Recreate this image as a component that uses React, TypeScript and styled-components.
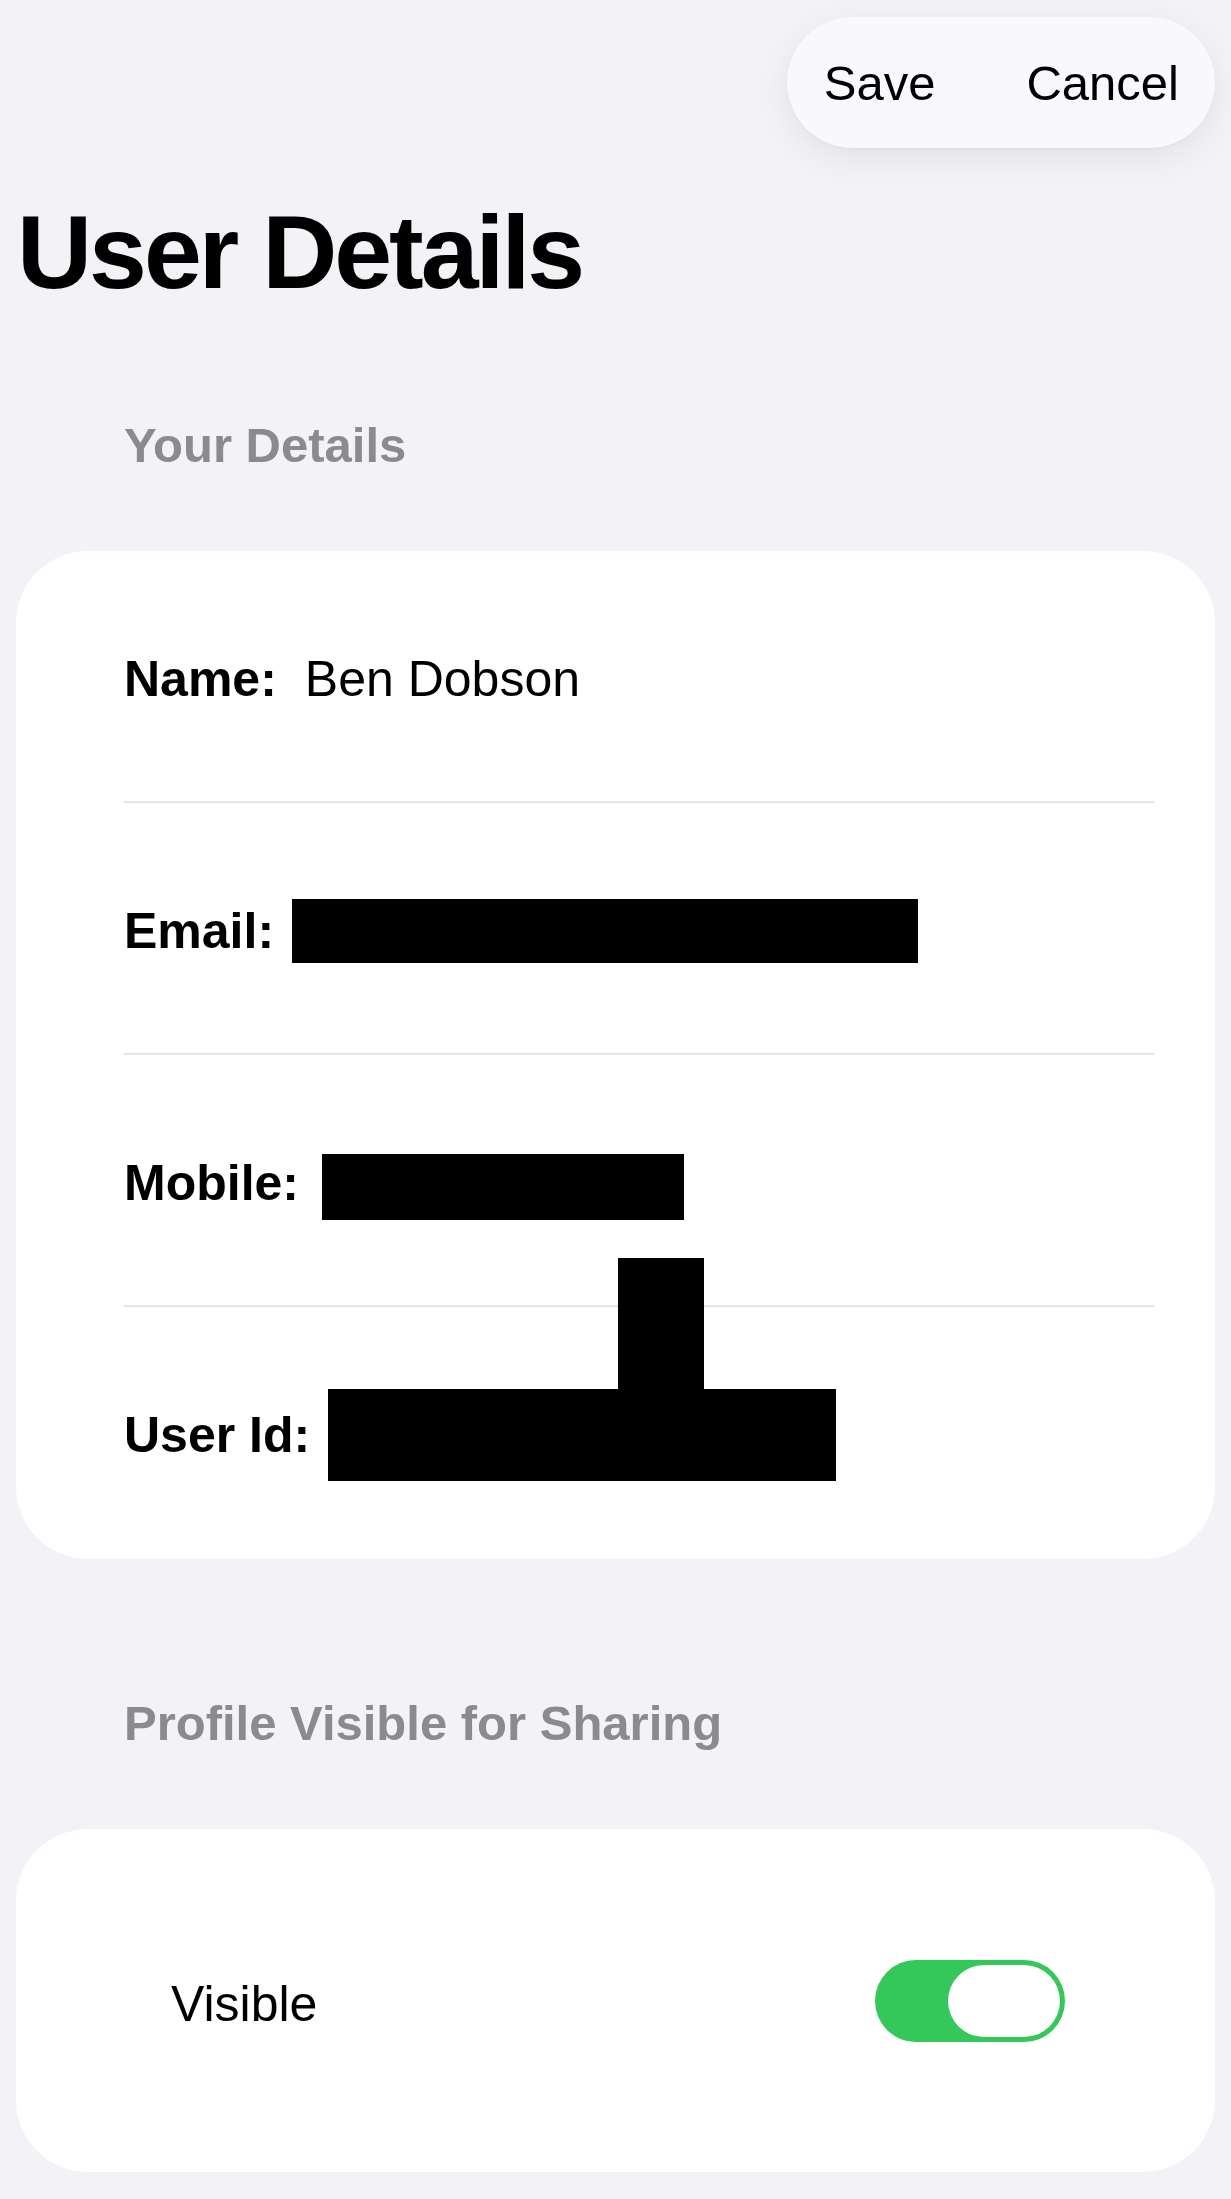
import React from "react";
import styled, { createGlobalStyle } from "styled-components";

const GlobalStyle = createGlobalStyle`
  html, body {
    margin: 0;
    padding: 0;
    background: #f2f2f7;
  }
  body {
    font-family: "Liberation Sans", Arial, sans-serif;
    color: #000;
    -webkit-font-smoothing: antialiased;
  }
  * { box-sizing: border-box; }
`;

const Page = styled.div`
  display: flex;
  flex-direction: column;
  width: 1231px;
  min-height: 2199px;
  padding: 17px 0 26px;
  background: #f2f2f7;
`;

const TopBar = styled.div`
  display: flex;
  justify-content: flex-end;
  padding: 0 16px;
`;

const ActionPill = styled.div`
  display: flex;
  align-items: center;
  gap: 91px;
  height: 131px;
  padding: 0 36px 0 37px;
  border-radius: 66px;
  background: #f9f9fd;
  box-shadow: 0 10px 34px rgba(0, 0, 0, 0.07), 0 1px 3px rgba(0, 0, 0, 0.03);
`;

const PillButton = styled.button`
  border: 0;
  padding: 0;
  background: transparent;
  font-family: "Liberation Sans", Arial, sans-serif;
  font-size: 49px;
  line-height: 60px;
  color: #000;
  cursor: pointer;
`;

const Title = styled.h1`
  margin: 52px 0 0;
  padding: 0 17px;
  font-size: 104px;
  line-height: 104px;
  font-weight: 700;
  letter-spacing: -3px;
`;

const SectionHeader = styled.h2<{ $top: number }>`
  margin: ${(p) => p.$top}px 0 0;
  padding: 0 0 0 124px;
  font-size: 49px;
  line-height: 49px;
  font-weight: 700;
  color: #8a8a8f;
`;

const Card = styled.div<{ $height?: number }>`
  display: flex;
  flex-direction: column;
  margin: 81px 16px 0;
  background: #fff;
  border-radius: 72px;
  ${(p) => (p.$height ? `height: ${p.$height}px;` : "")}
`;

const DetailRow = styled.div`
  display: flex;
  align-items: center;
  height: 252px;
  margin: 0 61px 0 108px;
  padding-top: 5px;
  border-bottom: 2px solid #e4e4e9;
  &:last-child {
    border-bottom-color: transparent;
  }
`;

const Label = styled.span`
  font-size: 50px;
  line-height: 60px;
  font-weight: 700;
  white-space: nowrap;
`;

const Value = styled.span`
  margin-left: 28px;
  font-size: 50px;
  line-height: 60px;
  white-space: nowrap;
`;

const Redaction = styled.span<{ $w: number; $h: number; $gap: number; $shift?: number }>`
  position: relative;
  display: inline-block;
  flex: none;
  width: ${(p) => p.$w}px;
  height: ${(p) => p.$h}px;
  margin-left: ${(p) => p.$gap}px;
  transform: translateY(${(p) => p.$shift ?? 0}px);
  background: #000;
`;

const RedactionStem = styled.span`
  position: absolute;
  left: 290px;
  bottom: 100%;
  width: 86px;
  height: 131px;
  background: #000;
`;

const ToggleRow = styled.div`
  display: flex;
  align-items: center;
  justify-content: space-between;
  height: 100%;
  padding: 0 150px 0 155px;
`;

const ToggleLabel = styled.span`
  margin-top: 6px;
  font-size: 50px;
  line-height: 60px;
`;

const Track = styled.div<{ $on: boolean }>`
  display: flex;
  justify-content: ${(p) => (p.$on ? "flex-end" : "flex-start")};
  align-items: center;
  width: 190px;
  height: 82px;
  padding: 0 5px;
  border-radius: 41px;
  background: ${(p) => (p.$on ? "#34c759" : "#e9e9eb")};
`;

const Knob = styled.div`
  width: 112px;
  height: 72px;
  border-radius: 36px;
  background: #fff;
`;

export default function App() {
  return (
    <>
      <GlobalStyle />
      <Page>
        <TopBar>
          <ActionPill>
            <PillButton>Save</PillButton>
            <PillButton>Cancel</PillButton>
          </ActionPill>
        </TopBar>

        <Title>User Details</Title>

        <SectionHeader $top={117}>Your Details</SectionHeader>
        <Card>
          <DetailRow>
            <Label>Name:</Label>
            <Value>Ben Dobson</Value>
          </DetailRow>
          <DetailRow>
            <Label>Email:</Label>
            <Redaction $w={626} $h={64} $gap={18} $shift={0} />
          </DetailRow>
          <DetailRow>
            <Label>Mobile:</Label>
            <Redaction $w={362} $h={66} $gap={23} $shift={4} />
          </DetailRow>
          <DetailRow>
            <Label>User Id:</Label>
            <Redaction $w={508} $h={92} $gap={18} $shift={0}>
              <RedactionStem />
            </Redaction>
          </DetailRow>
        </Card>

        <SectionHeader $top={140}>Profile Visible for Sharing</SectionHeader>
        <Card $height={343}>
          <ToggleRow>
            <ToggleLabel>Visible</ToggleLabel>
            <Track $on>
              <Knob />
            </Track>
          </ToggleRow>
        </Card>
      </Page>
    </>
  );
}
